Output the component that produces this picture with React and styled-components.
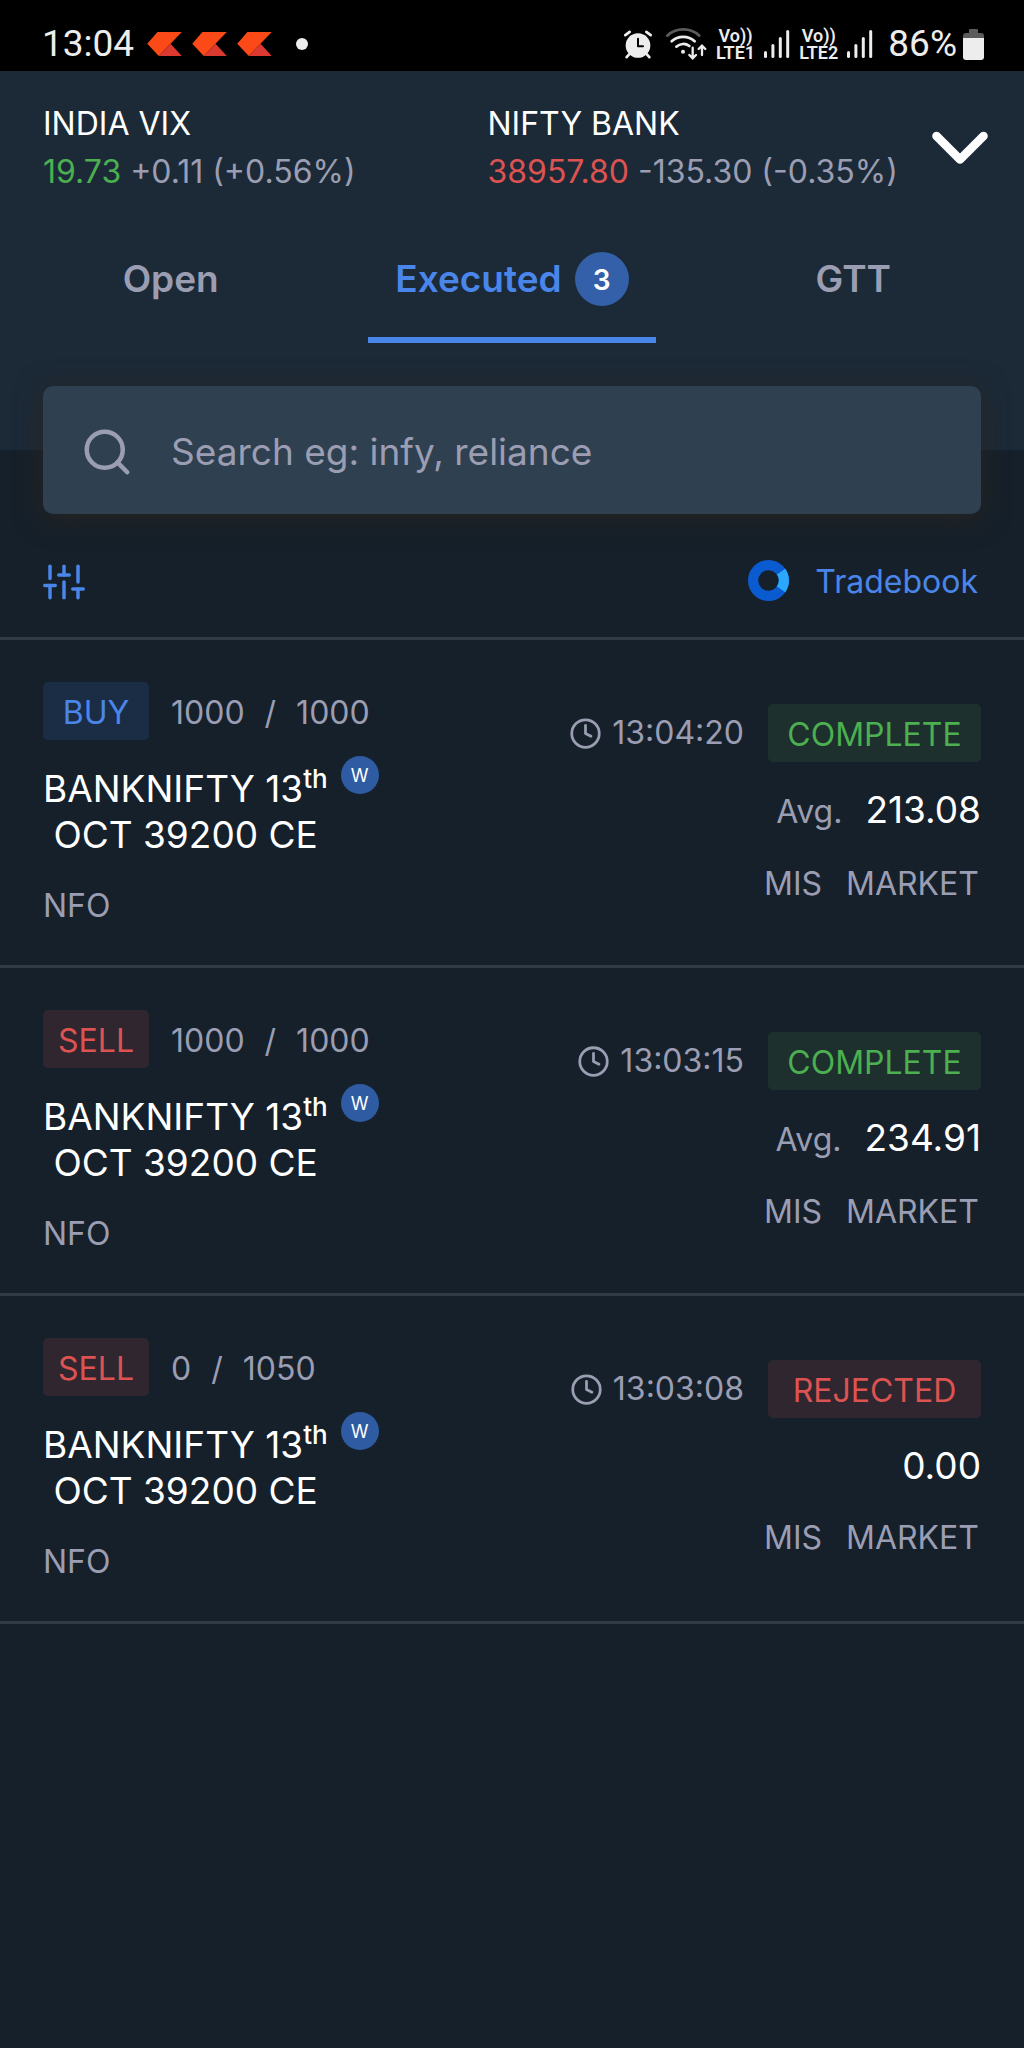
import React from 'react';
import styled, { createGlobalStyle } from 'styled-components';
import { FiClock, FiSearch, FiSliders } from 'react-icons/fi';

const tickers = [
  { name: 'INDIA VIX', price: '19.73', change: '+0.11 (+0.56%)', up: true },
  { name: 'NIFTY BANK', price: '38957.80', change: '-135.30 (-0.35%)', up: false },
];

const tabs = [
  { label: 'Open' },
  { label: 'Executed', count: 3, active: true },
  { label: 'GTT' },
];

const orders = [
  { id: 1, side: 'BUY', filled: 1000, qty: 1000, time: '13:04:20', status: 'COMPLETE', avg: '213.08' },
  { id: 2, side: 'SELL', filled: 1000, qty: 1000, time: '13:03:15', status: 'COMPLETE', avg: '234.91' },
  { id: 3, side: 'SELL', filled: 0, qty: 1050, time: '13:03:08', status: 'REJECTED', price: '0.00' },
];

const tones = {
  BUY: { color: '#4a86ea', bg: '#1b2d44' },
  SELL: { color: '#dc5351', bg: '#302630' },
  COMPLETE: { color: '#4caf50', bg: '#1d302e' },
  REJECTED: { color: '#dc5351', bg: '#302630' },
};

const KiteLogo = () => (
  <svg width="35" height="24" viewBox="0 0 105 73" aria-hidden="true">
    <path d="M0 36 31 0H105L35 73Z" fill="#fb4a18" />
    <path d="M71 36 105 73H35Z" fill="#dc3930" />
  </svg>
);

const AlarmIcon = () => (
  <svg width="28" height="29" viewBox="0 0 84 86" fill="none" stroke="#ededed" strokeLinecap="round" aria-hidden="true">
    <circle cx="42" cy="46" r="37" fill="#ededed" stroke="none" />
    <path d="M4 15 17 5M80 15 67 5" strokeWidth="8" />
    <path d="M16 72 8 81M68 72 76 81" strokeWidth="8" />
    <path d="M42 26V48H57" stroke="#000" strokeWidth="6" strokeLinejoin="round" />
  </svg>
);

const WifiIcon = () => (
  <svg width="41" height="32" viewBox="0 0 123 96" fill="none" stroke="#ededed" strokeLinecap="round" aria-hidden="true">
    <path d="M4 23C30-2 74-2 100 23" stroke="#5c5c5c" strokeWidth="8" />
    <path d="M17 40C36 22 67 22 86 40" strokeWidth="8" />
    <path d="M31 56C42 46 58 45 70 54" strokeWidth="8" />
    <circle cx="51" cy="71" r="6" fill="#ededed" stroke="none" />
    <path d="M80 59V90M70 81 80 91 90 81" strokeWidth="7" />
    <path d="M108 81V54M98 63 108 53 118 63" strokeWidth="7" />
  </svg>
);

const SignalIcon = () => (
  <svg width="26" height="28" viewBox="0 0 26 28" fill="#ededed" aria-hidden="true">
    <rect x="0" y="21" width="3" height="7" rx="1.5" />
    <rect x="7.4" y="14" width="3" height="14" rx="1.5" />
    <rect x="14.8" y="7" width="3" height="21" rx="1.5" />
    <rect x="22.2" y="0" width="3" height="28" rx="1.5" />
  </svg>
);

const BatteryIcon = () => (
  <svg width="21" height="31" viewBox="0 0 21 31" aria-hidden="true">
    <path d="M6 1Q6 0 7 0H14Q15 0 15 1V4H18Q21 4 21 7V10H0V7Q0 4 3 4H6Z" fill="#5c5c5c" />
    <path d="M0 9H21V28Q21 31 18 31H3Q0 31 0 28Z" fill="#ededed" />
  </svg>
);

const ChevronDown = () => (
  <svg width="56" height="34" viewBox="0 0 56 34" fill="none" stroke="#fff" strokeWidth="8.6" strokeLinecap="round" strokeLinejoin="round" aria-hidden="true">
    <path d="M4.5 5 28 28.5 51.5 5" />
  </svg>
);

const ConsoleLogo = () => (
  <svg width="41" height="41" viewBox="0 0 41 41" fill="none" strokeWidth="10.2" aria-hidden="true">
    <circle cx="20.5" cy="20.5" r="15.4" stroke="#0a5ad0" />
    <path d="M33.1 11.7A15.4 15.4 0 0 1 33.1 29.3" stroke="#2aa8fb" />
  </svg>
);

const Volte = ({ sim }) => (
  <VolteLabel>
    <span>Vo))</span>
    <span>LTE{sim}</span>
  </VolteLabel>
);

const Order = ({ order }) => {
  const { side, filled, qty, time, status, avg, price } = order;
  return (
    <OrderRow>
      <div>
        <QtyLine>
          <Tag $tone={tones[side]}>{side}</Tag>
          <Qty>
            <span>{filled}</span>
            <span>/</span>
            <span>{qty}</span>
          </Qty>
        </QtyLine>
        <Instrument>
          <h2>
            BANKNIFTY 13<sup>th</sup>
            <br />
            &nbsp;OCT 39200 CE
          </h2>
          <Weekly>W</Weekly>
        </Instrument>
        <Muted>NFO</Muted>
      </div>
      <OrderInfo>
        <StatusLine>
          <Time>
            <FiClock size={33} />
            {time}
          </Time>
          <Tag $wide $tone={tones[status]}>{status}</Tag>
        </StatusLine>
        <PriceLine>
          {avg && <Muted>Avg.</Muted>}
          <Price>{avg || price}</Price>
        </PriceLine>
        <ProductLine>
          <Muted>MIS</Muted>
          <Muted>MARKET</Muted>
        </ProductLine>
      </OrderInfo>
    </OrderRow>
  );
};

const App = () => {
  return (
    <>
      <GlobalStyle />
      <StatusBar>
        <StatusGroup $gap={10}>
          <Clock>13:04</Clock>
          <KiteLogo />
          <KiteLogo />
          <KiteLogo />
          <Dot />
        </StatusGroup>
        <StatusGroup $gap={9}>
          <StatusGroup $gap={14}>
            <AlarmIcon />
            <WifiIcon />
          </StatusGroup>
          <Volte sim={1} />
          <SignalIcon />
          <Volte sim={2} />
          <SignalIcon />
          <Battery>
            86%
            <BatteryIcon />
          </Battery>
        </StatusGroup>
      </StatusBar>

      <Header>
        <Tickers>
          {tickers.map((t) => (
            <Ticker key={t.name}>
              <div>{t.name}</div>
              <TickerPrice $up={t.up}>
                <b>{t.price}</b> {t.change}
              </TickerPrice>
            </Ticker>
          ))}
          <IconButton aria-label="Show market overview">
            <ChevronDown />
          </IconButton>
        </Tickers>
        <Tabs>
          {tabs.map((tab) => (
            <Tab key={tab.label} $active={tab.active}>
              {tab.label}
              {tab.count && <Count>{tab.count}</Count>}
            </Tab>
          ))}
        </Tabs>
        <Search>
          <FiSearch size={54} />
          <input type="text" aria-label="Search orders" placeholder="Search eg: infy, reliance" />
        </Search>
      </Header>

      <main>
        <Toolbar>
          <IconButton aria-label="Filter orders">
            <FiSliders size={42} />
          </IconButton>
          <Tradebook href="#tradebook">
            <ConsoleLogo />
            Tradebook
          </Tradebook>
        </Toolbar>
        {orders.map((order) => (
          <Order key={order.id} order={order} />
        ))}
      </main>
    </>
  );
};

const GlobalStyle = createGlobalStyle`
  * {
    box-sizing: border-box;
    margin: 0;
    padding: 0;
  }

  body {
    min-height: 100vh;
    background: #16202a;
    color: #fff;
    font-family: Inter, "Liberation Sans", sans-serif;
    font-size: 32px;
    line-height: 48px;
  }

  svg {
    display: block;
    flex-shrink: 0;
  }
`;

const StatusBar = styled.div`
  display: flex;
  justify-content: space-between;
  height: 71px;
  padding: 17px 40px 0 42px;
  background: #000;
  color: #ededed;
  font-family: Roboto, sans-serif;
`;

const StatusGroup = styled.div`
  display: flex;
  align-items: center;
  gap: ${({ $gap }) => $gap}px;
`;

const Clock = styled.span`
  padding-right: 3px;
  font-size: 37px;
`;

const Dot = styled.span`
  width: 12px;
  height: 12px;
  margin-left: 14px;
  border-radius: 50%;
  background: #ededed;
`;

const VolteLabel = styled.span`
  display: flex;
  flex-direction: column;
  align-items: center;
  font-size: 18px;
  font-weight: 600;
  line-height: 17px;
`;

const Battery = styled.span`
  display: flex;
  align-items: center;
  gap: 6px;
  padding-left: 6px;
  font-size: 37px;
`;

const Header = styled.header`
  display: flow-root;
  background: #1c2a38;
`;

const Tickers = styled.div`
  display: grid;
  grid-template-columns: 1fr 1fr 56px;
  align-items: center;
  padding: 29px 36px 0 43px;
`;

const Ticker = styled.div`
  white-space: nowrap;
`;

const TickerPrice = styled.div`
  color: #9b9eb3;

  b {
    font-weight: 400;
    color: ${({ $up }) => ($up ? '#4caf50' : '#dc5351')};
  }
`;

const IconButton = styled.button`
  border: 0;
  background: none;
  color: #4a86ea;
  cursor: pointer;
`;

const Tabs = styled.nav`
  display: grid;
  grid-template-columns: repeat(3, 1fr);
`;

const Tab = styled.button`
  display: flex;
  align-items: center;
  justify-content: center;
  gap: 13px;
  margin: 0 27px;
  padding: 56px 0 31px;
  border: 0;
  border-bottom: 6px solid ${({ $active }) => ($active ? '#4a86ea' : 'transparent')};
  background: none;
  color: ${({ $active }) => ($active ? '#4a86ea' : '#9b9eb3')};
  font: 600 37px/54px Inter, sans-serif;
  cursor: pointer;
`;

const Count = styled.span`
  width: 54px;
  height: 54px;
  border-radius: 50%;
  background: #3360a8;
  color: #fff;
  font-size: 28px;
  line-height: 56px;
`;

const Search = styled.label`
  display: flex;
  align-items: center;
  gap: 37px;
  height: 128px;
  margin: 43px 43px -64px;
  padding: 4px 37px 0;
  border-radius: 10px;
  background: #2f4051;
  box-shadow: 0 4px 28px rgba(42, 38, 30, 0.8);
  color: #9b9eb3;

  input {
    flex: 1;
    min-width: 0;
    border: 0;
    outline: 0;
    background: none;
    color: #fff;
    font: 400 37px/54px Inter, sans-serif;
  }

  input::placeholder {
    color: #9b9eb3;
    opacity: 1;
  }
`;

const Toolbar = styled.div`
  display: flex;
  align-items: center;
  justify-content: space-between;
  padding: 106px 46px 29px 43px;
  border-bottom: 3px solid #2f3a46;
`;

const Tradebook = styled.a`
  display: flex;
  align-items: flex-start;
  gap: 26px;
  color: #4a86ea;
  line-height: 52px;
  text-decoration: none;

  svg {
    margin-top: 4px;
  }
`;

const OrderRow = styled.article`
  display: flex;
  justify-content: space-between;
  padding: 42px 43px 35px;
  border-bottom: 3px solid #2f3a46;
`;

const QtyLine = styled.div`
  display: flex;
  gap: 22px;
  line-height: 62px;
`;

const Tag = styled.span`
  width: ${({ $wide }) => ($wide ? 213 : 106)}px;
  height: 58px;
  border-radius: 5px;
  background: ${({ $tone }) => $tone.bg};
  color: ${({ $tone }) => $tone.color};
  line-height: 62px;
  text-align: center;
`;

const Qty = styled.div`
  display: flex;
  gap: 20px;
  color: #9b9eb3;
`;

const Instrument = styled.div`
  display: flex;
  align-items: flex-start;
  margin: 12px 0 24px;

  h2 {
    padding-top: 10px;
    font-size: 37px;
    font-weight: 400;
    line-height: 46px;
  }

  sup {
    font-size: 26px;
    font-weight: 500;
    line-height: 0;
    vertical-align: 14px;
  }
`;

const Weekly = styled.span`
  width: 38px;
  height: 38px;
  margin-left: 13px;
  border-radius: 50%;
  background: #2f5ba3;
  font-size: 18px;
  line-height: 40px;
  text-align: center;
`;

const Muted = styled.div`
  color: #9b9eb3;
`;

const OrderInfo = styled.div`
  display: flex;
  flex-direction: column;
  align-items: flex-end;
  gap: 24px;
  padding-top: 22px;
`;

const StatusLine = styled.div`
  display: flex;
  gap: 24px;
`;

const Time = styled.div`
  display: flex;
  align-items: center;
  gap: 10px;
  color: #9b9eb3;
`;

const PriceLine = styled.div`
  display: flex;
  align-items: baseline;
  gap: 23px;
`;

const Price = styled.strong`
  font-size: 37px;
  font-weight: 400;
`;

const ProductLine = styled.div`
  display: flex;
  gap: 24px;
  padding-right: 2px;
`;

export default App;
